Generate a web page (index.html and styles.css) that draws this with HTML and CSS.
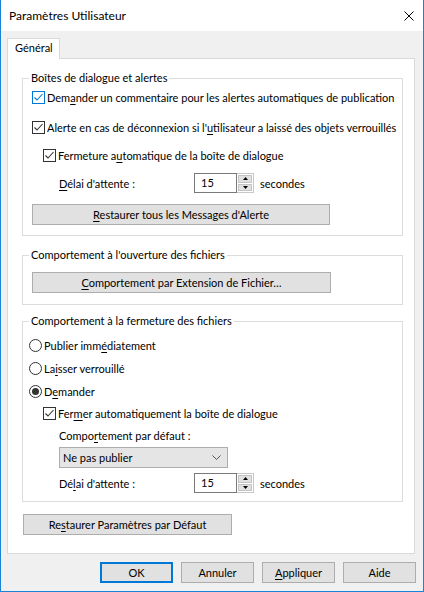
FILE: index.html
```html
<!DOCTYPE html>
<html lang="fr">
<head>
<meta charset="utf-8">
<title>Paramètres Utilisateur</title>
<link rel="stylesheet" href="styles.css">
</head>
<body>
<div class="window">
  <div class="titlebar">
    <span class="title">Paramètres Utilisateur</span>
    <svg class="close" width="10" height="10" viewBox="0 0 10 10"><path d="M0.5 0.5L9.5 9.5M9.5 0.5L0.5 9.5" stroke="#000" stroke-width="1" fill="none"/></svg>
  </div>
  <div class="tabs"><div class="tab">Général</div></div>
  <div class="panel">
    <section class="group g1">
      <div class="legend">Boîtes de dialogue et alertes</div>
      <div class="row ind1 mt1"><span class="cb focus"><svg width="11" height="11" viewBox="0 0 11 11"><path d="M1.5 5.5L4 8L9.5 2" stroke="#0078d7" stroke-width="1.1" fill="none"/></svg></span><span class="lbl">Dem<u>a</u>nder un commentaire pour les alertes automatiques de publication</span></div>
      <div class="row ind1 mt10"><span class="cb"><svg width="11" height="11" viewBox="0 0 11 11"><path d="M1.5 5.5L4 8L9.5 2" stroke="#333" stroke-width="1.1" fill="none"/></svg></span><span class="lbl">Alerte en cas de déconnexion si l'<u>u</u>tilisateur a laissé des objets verrouillés</span></div>
      <div class="row ind2 mt8"><span class="cb"><svg width="11" height="11" viewBox="0 0 11 11"><path d="M1.5 5.5L4 8L9.5 2" stroke="#333" stroke-width="1.1" fill="none"/></svg></span><span class="lbl">Fermeture a<u>u</u>tomatique de la boîte de dialogue</span></div>
      <div class="row ind3 mt8">
        <span class="delay-lbl"><u>D</u>élai d'attente :</span>
        <span class="spin"><span class="spin-val">15</span><span class="spin-btns"><span class="sb"><svg width="5" height="3" viewBox="0 0 5 3"><path d="M2.5 0L5 3H0Z" fill="#000"/></svg></span><span class="sb"><svg width="5" height="3" viewBox="0 0 5 3"><path d="M0 0H5L2.5 3Z" fill="#000"/></svg></span></span></span>
        <span class="unit">secondes</span>
      </div>
      <button class="btn wide1 mt11"><span><u>R</u>estaurer tous les Messages d'Alerte</span></button>
    </section>

    <section class="group g2">
      <div class="legend">Comportement à l'ouverture des fichiers</div>
      <button class="btn wide2 mt9"><span><u>C</u>omportement par Extension de Fichier…</span></button>
    </section>

    <section class="group g3">
      <div class="legend">Comportement à la fermeture des fichiers</div>
      <div class="row indr mt6"><span class="radio"></span><span class="lbl">Publier imm<u>é</u>diatement</span></div>
      <div class="row indr mt3"><span class="radio"></span><span class="lbl">La<u>i</u>sser verrouillé</span></div>
      <div class="row indr mt3"><span class="radio on"></span><span class="lbl">D<u>e</u>mander</span></div>
      <div class="row ind2 mt2"><span class="cb"><svg width="11" height="11" viewBox="0 0 11 11"><path d="M1.5 5.5L4 8L9.5 2" stroke="#333" stroke-width="1.1" fill="none"/></svg></span><span class="lbl">Fer<u>m</u>er automatiquement la boîte de dialogue</span></div>
      <div class="row ind3 mt2"><span>Compo<u>r</u>tement par défaut :</span></div>
      <div class="select ind3 mt2"><span>Ne pas publier</span><svg width="9" height="5" viewBox="0 0 9 5"><path d="M0.5 0.5L4.5 4.5L8.5 0.5" stroke="#555" stroke-width="1" fill="none"/></svg></div>
      <div class="row ind3 mt5">
        <span class="delay-lbl">Dé<u>l</u>ai d'attente :</span>
        <span class="spin"><span class="spin-val">15</span><span class="spin-btns"><span class="sb"><svg width="5" height="3" viewBox="0 0 5 3"><path d="M2.5 0L5 3H0Z" fill="#000"/></svg></span><span class="sb"><svg width="5" height="3" viewBox="0 0 5 3"><path d="M0 0H5L2.5 3Z" fill="#000"/></svg></span></span></span>
        <span class="unit">secondes</span>
      </div>
    </section>

    <button class="btn restore"><span>Re<u>s</u>taurer Paramètres par Défaut</span></button>
  </div>
  <div class="actions">
    <button class="btn act default">OK</button>
    <button class="btn act">Annuler</button>
    <button class="btn act"><span><u>A</u>ppliquer</span></button>
    <button class="btn act">Aide</button>
  </div>
</div>
</body>
</html>
```

FILE: styles.css
```css
* { box-sizing: border-box; }
body {
  margin: 0;
  font-family: Lato, "Noto Sans", sans-serif;
  font-size: 11px;
  color: #000;
}
u { text-decoration-thickness: 1px; text-underline-offset: 2px; }

.window {
  width: 424px;
  height: 592px;
  border: 1px solid #1883d7;
  border-top: none;
  background: #f0f0f0;
  display: flex;
  flex-direction: column;
}

.titlebar {
  flex: none;
  height: 31px;
  background: #fff;
  display: flex;
  align-items: center;
  justify-content: space-between;
  padding: 0 9px 0 8px;
}
.title { font-size: 12px; }
.close { display: block; margin-top: 1px; }

.tabs {
  display: flex;
  margin: 7px 0 -1px 6px;
  position: relative;
  z-index: 1;
}
.tab {
  width: 53px;
  height: 21px;
  border: 1px solid #d9d9d9;
  border-bottom: none;
  background: #fff;
  padding-left: 7px;
  line-height: 18px;
}

.panel {
  flex: none;
  height: 496px;
  margin: 0 8px 0 6px;
  border: 1px solid #d9d9d9;
  background: #fff;
  padding: 19px 11px 0 14px;
  display: flex;
  flex-direction: column;
  align-items: stretch;
}

.group {
  border: 1px solid #dcdcdc;
  display: flex;
  flex-direction: column;
  align-items: flex-start;
}
.g1 { padding-bottom: 10px; }
.g2 { margin-top: 19px; padding-bottom: 11px; }
.g3 { margin-top: 16px; padding-bottom: 8px; }

.legend {
  margin: -9px 0 0 6px;
  padding: 0 2px;
  height: 16px;
  line-height: 16px;
  background: #fff;
}

.row {
  display: flex;
  align-items: center;
  height: 20px;
  white-space: nowrap;
}
.ind1 { margin-left: 9px; }
.ind2 { margin-left: 20px; }
.ind3 { margin-left: 36px; }
.indr { margin-left: 6px; }
.mt1 { margin-top: 1px; }
.mt2 { margin-top: 2px; }
.mt3 { margin-top: 3px; }
.mt5 { margin-top: 5px; }
.mt6 { margin-top: 6px; }
.mt8 { margin-top: 8px; }
.mt9 { margin-top: 9px; }
.mt10 { margin-top: 10px; }
.mt11 { margin-top: 11px; }

.lbl { margin-left: 2px; }

.cb {
  flex: none;
  width: 13px;
  height: 13px;
  border: 1px solid #333;
  background: #fff;
  display: flex;
}
.cb svg { display: block; }
.cb.focus { border-color: #0078d7; }

.radio {
  flex: none;
  width: 13px;
  height: 13px;
  border: 1px solid #333;
  border-radius: 50%;
  background: #fff;
  display: flex;
  align-items: center;
  justify-content: center;
}
.radio.on::after {
  content: "";
  width: 7px;
  height: 7px;
  border-radius: 50%;
  background: #333;
}

.delay-lbl { width: 135px; flex: none; }
.spin { display: flex; height: 20px; flex: none; }
.spin-val {
  width: 43px;
  height: 20px;
  border: 1px solid #7a7a7a;
  padding-left: 6px;
  line-height: 18px;
  background: #fff;
}
.spin-btns {
  width: 17px;
  height: 20px;
  border: 1px solid #c8c8c8;
  border-left: none;
  padding: 1px;
  display: flex;
  flex-direction: column;
  gap: 1px;
}
.sb {
  flex: 1;
  background: #e1e1e1;
  border: 1px solid #c4c4c4;
  display: flex;
  align-items: center;
  justify-content: center;
}
.sb svg { display: block; }
.unit { margin-left: 6px; }

.btn {
  font: inherit;
  color: #000;
  background: #e1e1e1;
  border: 1px solid #adadad;
  height: 21px;
  padding: 0;
  display: flex;
  align-items: center;
  justify-content: center;
  white-space: nowrap;
}
.wide1 { width: 298px; margin-left: 9px; }
.wide2 { width: 299px; margin-left: 9px; }
.restore { width: 209px; margin: 12px 0 0 1px; align-self: flex-start; }

.select {
  width: 169px;
  height: 21px;
  background: #e5e5e5;
  border: 1px solid #adadad;
  display: flex;
  align-items: center;
  justify-content: space-between;
  padding: 0 6px 0 3px;
}
.select svg { display: block; }

.actions {
  flex: none;
  margin-top: 8px;
  padding: 0 7px;
  display: flex;
  justify-content: flex-end;
  gap: 8px;
}
.act { width: 73px; }
.act.default { border: 2px solid #0078d7; }
```
